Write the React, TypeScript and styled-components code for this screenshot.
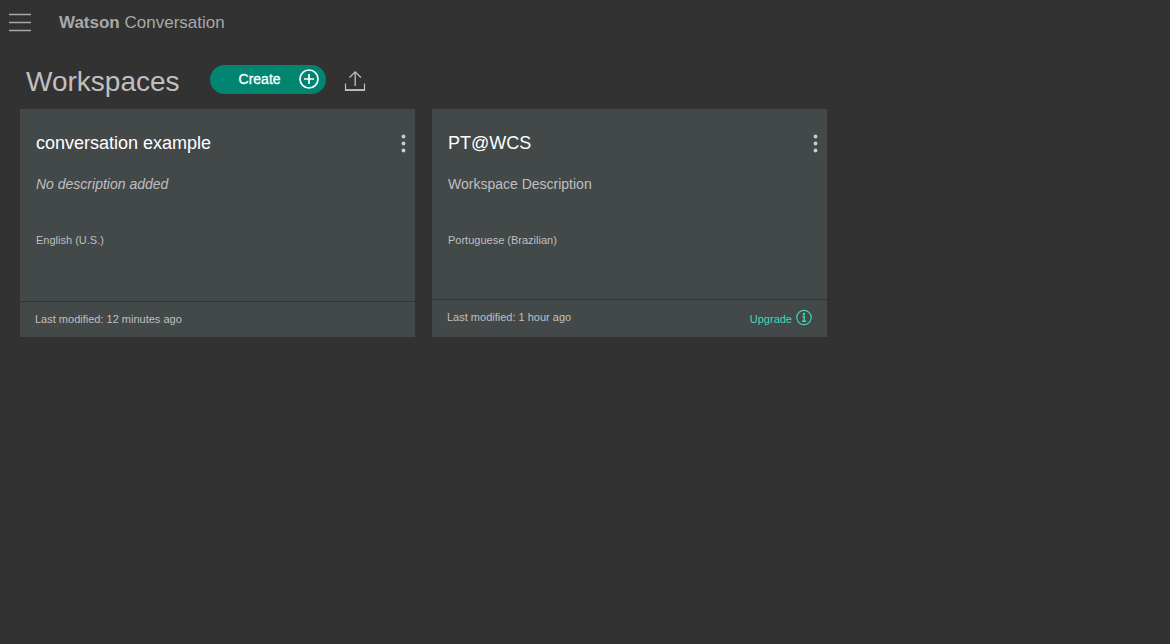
import React from "react";
import styled, { createGlobalStyle } from "styled-components";

const GlobalStyle = createGlobalStyle`
  *, *::before, *::after { box-sizing: border-box; }
  body {
    margin: 0;
    background: #323232;
    color: #c0bfc0;
    font-family: "Helvetica Neue", "Liberation Sans", Arial, sans-serif;
  }
  h1, h2, p { margin: 0; font-weight: 400; }
  button {
    padding: 0;
    border: 0;
    background: none;
    color: inherit;
    font: inherit;
    cursor: pointer;
  }
  svg { display: block; }
`;

const TopBar = styled.header`
  display: flex;
  align-items: center;
  gap: 28px;
  height: 44px;
  padding: 0 9px;
  color: #a8a8a8;
`;

const IconButton = styled.button`
  display: block;
  flex: none;
`;

const Brand = styled.div`
  font-size: 17px;
  line-height: 20px;
  padding-top: 2px;
`;

const Main = styled.main`
  padding: 18px 20px 20px;
`;

const Heading = styled.div`
  display: flex;
  align-items: center;
  flex-wrap: wrap;
  min-height: 36px;
  padding-left: 6px;
`;

const Title = styled.h1`
  font-size: 28px;
  line-height: 36px;
  padding-top: 2px;
  margin-right: 30px;
`;

const Actions = styled.div`
  display: flex;
  align-items: center;
  gap: 18px;
  padding-bottom: 3px;
`;

const CreateButton = styled.button`
  display: flex;
  align-items: center;
  justify-content: space-between;
  width: 116px;
  height: 29px;
  padding: 0 6px 2px 29px;
  border-radius: 15px;
  background: #008571;
  color: #fff;
  font-size: 14px;
  -webkit-text-stroke: 0.3px #fff;
`;

const Cards = styled.div`
  display: grid;
  grid-template-columns: repeat(auto-fill, minmax(min(100%, 380px), 395px));
  gap: 17px;
  margin-top: 9px;
`;

const CardBox = styled.article`
  display: flex;
  flex-direction: column;
  min-height: 228px;
  background: #434949;
`;

const CardBody = styled.div`
  flex: 1;
  padding: 22px 9px 16px 16px;
`;

const CardHeader = styled.div`
  display: flex;
  align-items: center;
  justify-content: space-between;
`;

const CardTitle = styled.h2`
  color: #fff;
  font-size: 18px;
  line-height: 24px;
`;

const Description = styled.p<{ $empty: boolean }>`
  margin-top: 19px;
  font-size: 14px;
  line-height: 20px;
  font-style: ${(p) => (p.$empty ? "italic" : "normal")};
`;

const Language = styled.p`
  margin-top: 38px;
  font-size: 11px;
  line-height: 16px;
`;

const CardFooter = styled.footer`
  display: flex;
  align-items: flex-start;
  justify-content: space-between;
  padding: 9px 15px 10px;
  border-top: 1px solid #2f3333;
  font-size: 11px;
  line-height: 16px;
`;

const UpgradeLink = styled.a`
  display: flex;
  align-items: flex-start;
  gap: 4px;
  color: #41d6b9;
  text-decoration: none;
`;

const UpgradeText = styled.span`
  padding-top: 2px;
`;

const MenuIcon = () => (
  <svg width="22" height="20" viewBox="0 0 22 20" fill="none" stroke="currentColor" aria-hidden="true">
    <path d="M0 2.500h22M0 10.500h22M0 18.500h22" strokeWidth="1.400" />
  </svg>
);

const PlusIcon = () => (
  <svg width="22" height="22" viewBox="0 0 22 22" fill="none" stroke="#fff" aria-hidden="true">
    <circle cx="11" cy="11" r="9" strokeWidth="1.700" />
    <path d="M11 6v10M6 11h10" strokeWidth="1.700" />
  </svg>
);

const UploadIcon = () => (
  <svg width="22" height="22" viewBox="0 0 22 22" fill="none" stroke="#b9c2c2" aria-hidden="true">
    <path d="M1.500 14.500v7h19v-7" strokeWidth="1.200" />
    <path d="M1 21h20" strokeWidth="1.800" />
    <path d="M11.200 17V3M5.500 8.500l5.700-5.700L16.900 8.500" strokeWidth="1.300" />
  </svg>
);

const DotsIcon = () => (
  <svg width="5" height="20" viewBox="0 0 5 20" fill="#c5cfcd" aria-hidden="true">
    <circle cx="2.500" cy="3.500" r="1.900" />
    <circle cx="2.500" cy="10.500" r="1.900" />
    <circle cx="2.500" cy="17.500" r="1.900" />
  </svg>
);

const InfoIcon = () => (
  <svg width="16" height="18" viewBox="0 0 16 18" fill="none" stroke="currentColor" aria-hidden="true">
    <circle cx="8" cy="8.500" r="7.200" strokeWidth="1.200" />
    <circle cx="8" cy="5" r="1.200" fill="currentColor" stroke="none" />
    <path d="M6.300 7.500h1.900v4.800M6 12.300h4.200" strokeWidth="1.400" />
  </svg>
);

type Workspace = {
  name: string;
  description?: string;
  language: string;
  modified: string;
  upgradable?: boolean;
};

const workspaces: Workspace[] = [
  { name: "conversation example", language: "English (U.S.)", modified: "12 minutes ago" },
  {
    name: "PT@WCS",
    description: "Workspace Description",
    language: "Portuguese (Brazilian)",
    modified: "1 hour ago",
    upgradable: true,
  },
];

const WorkspaceCard = ({ workspace }: { workspace: Workspace }) => (
  <CardBox>
    <CardBody>
      <CardHeader>
        <CardTitle>{workspace.name}</CardTitle>
        <IconButton type="button" aria-label={`Options for ${workspace.name}`}>
          <DotsIcon />
        </IconButton>
      </CardHeader>
      <Description $empty={!workspace.description}>
        {workspace.description ?? "No description added"}
      </Description>
      <Language>{workspace.language}</Language>
    </CardBody>
    <CardFooter>
      <span>Last modified: {workspace.modified}</span>
      {workspace.upgradable && (
        <UpgradeLink href="#upgrade">
          <UpgradeText>Upgrade</UpgradeText>
          <InfoIcon />
        </UpgradeLink>
      )}
    </CardFooter>
  </CardBox>
);

export default function App() {
  return (
    <>
      <GlobalStyle />
      <TopBar>
        <IconButton type="button" aria-label="Open menu">
          <MenuIcon />
        </IconButton>
        <Brand>
          <b>Watson</b> Conversation
        </Brand>
      </TopBar>
      <Main>
        <Heading>
          <Title>Workspaces</Title>
          <Actions>
            <CreateButton type="button">
              Create
              <PlusIcon />
            </CreateButton>
            <IconButton type="button" aria-label="Import workspace">
              <UploadIcon />
            </IconButton>
          </Actions>
        </Heading>
        <Cards>
          {workspaces.map((workspace) => (
            <WorkspaceCard key={workspace.name} workspace={workspace} />
          ))}
        </Cards>
      </Main>
    </>
  );
}
